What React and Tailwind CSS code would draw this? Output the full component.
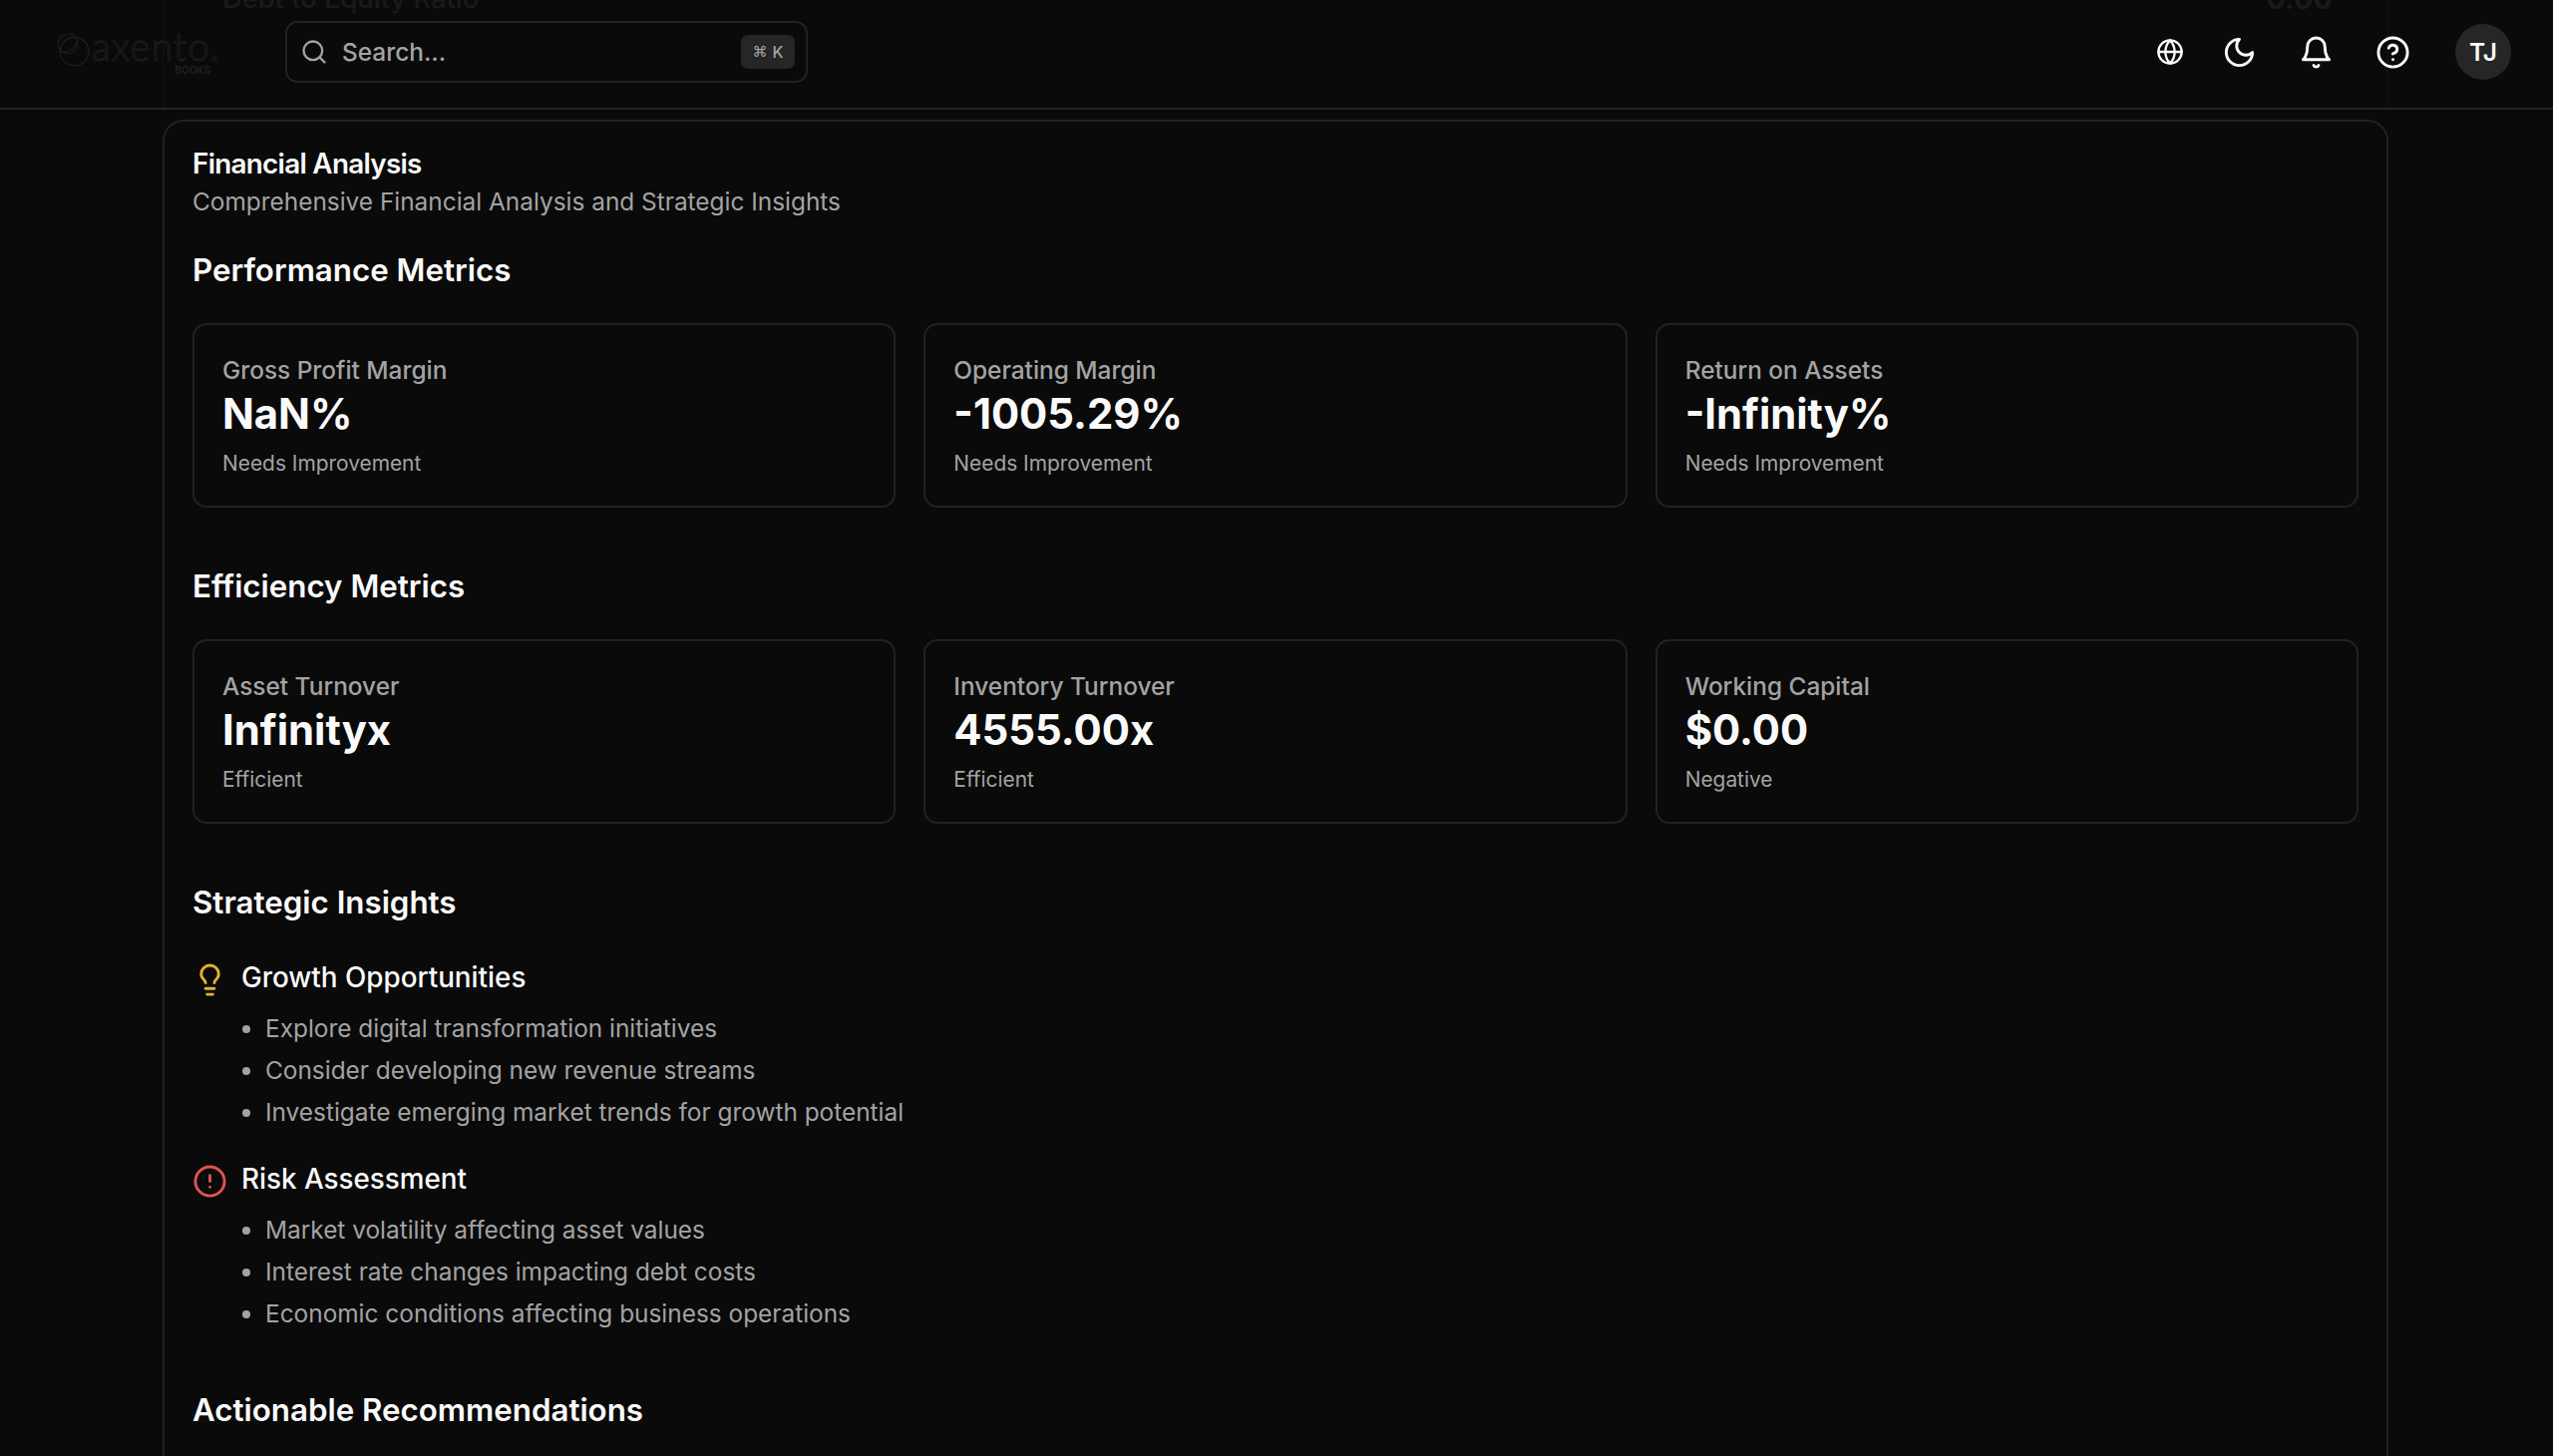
import { Search, Globe, CircleHelp, Lightbulb, CircleAlert } from "lucide-react";

const performance = [
  { label: "Gross Profit Margin", value: "NaN%", note: "Needs Improvement" },
  { label: "Operating Margin", value: "-1005.29%", note: "Needs Improvement" },
  { label: "Return on Assets", value: "-Infinity%", note: "Needs Improvement" },
];

const efficiency = [
  { label: "Asset Turnover", value: "Infinityx", note: "Efficient" },
  { label: "Inventory Turnover", value: "4555.00x", note: "Efficient" },
  { label: "Working Capital", value: "$0.00", note: "Negative" },
];

const growth = [
  "Explore digital transformation initiatives",
  "Consider developing new revenue streams",
  "Investigate emerging market trends for growth potential",
];

const risks = [
  "Market volatility affecting asset values",
  "Interest rate changes impacting debt costs",
  "Economic conditions affecting business operations",
];

function Metric({ label, value, note }) {
  return (
    <div className="h-[185px] rounded-[14px] border-2 border-[#222222] px-[28px] pt-[26px]">
      <div className="text-[24.4px] leading-[38px] font-medium text-[#a3a3a3]">{label}</div>
      <div className="text-[41.8px] leading-[50px] font-bold text-[#fafafa]">{value}</div>
      <div className="mt-[9px] text-[20.9px] leading-[32px] text-[#a3a3a3]">{note}</div>
    </div>
  );
}

function Insight({ icon, title, items }) {
  return (
    <div>
      <div className="flex h-[42px] items-center gap-[14px]">
        <span className="mt-[5px]">{icon}</span>
        <h4 className="text-[27.8px] leading-[42px] font-medium text-[#fafafa]">{title}</h4>
      </div>
      <ul className="mt-[9px] ml-[73px] list-disc text-[24.4px] leading-[42px] text-[#a3a3a3] marker:text-[#a3a3a3]">
        {items.map((item) => (
          <li key={item}>{item}</li>
        ))}
      </ul>
    </div>
  );
}

function Header() {
  return (
    <header className="relative h-[110px] overflow-hidden border-b-2 border-[#222222]">
      {/* the part of the page that has scrolled under the bar */}
      <div className="absolute top-0 left-[163px] flex h-[108px] w-[2232px] items-start justify-between border-x-2 border-[#0f0f0f] pr-[54px] pl-[58px] text-[27.3px] leading-[34px] font-medium text-[#1a1a1a]">
        <span className="-mt-[18px]">Debt to Equity Ratio</span>
        <span className="-mt-[18px] text-[29px] font-bold">0.00</span>
      </div>
      <div className="relative flex h-[104px] items-center pr-[42px] pl-[57px]">
        <div className="flex w-[229px] items-center">
          <svg viewBox="3 3 30 30" className="mt-[-4px] h-[33px] w-[33px] text-[#1f1f1f]" fill="none" stroke="currentColor" strokeWidth="1.1">
            <circle cx="19" cy="19" r="13" />
            <circle cx="13" cy="12" r="9" />
            <path d="M7 19c4 2 12-1 14-9" />
          </svg>
          <div className="ml-[7px] flex w-[124px] flex-col items-end">
            <span className="font-['Lato',sans-serif] text-[39px] leading-[36px] font-light tracking-[1px] text-transparent [-webkit-text-stroke:1px_#1d1d1d]">axento.</span>
            <span className="mr-[10px] text-[10px] leading-[12px] font-bold text-[#1f1f1f]">BOOKS</span>
          </div>
        </div>
        <div className="flex h-[62px] w-[524px] items-center rounded-[12px] border-2 border-[#222222] bg-[#0a0a0a] pr-[11px] pl-[13px]">
          <Search className="h-[28px] w-[28px] text-[#a3a3a3]" />
          <span className="ml-[14px] text-[24.4px] font-medium text-[#a3a3a3]">Search...</span>
          <span className="ml-auto flex h-[34px] w-[54px] items-center justify-center gap-[5px] rounded-[7px] bg-[#262626] text-[16px] font-medium text-[#a3a3a3]">
            <span className="font-['DejaVu_Sans',sans-serif] text-[15px]">⌘</span>
            <span>K</span>
          </span>
        </div>
        <div className="ml-auto flex items-center text-[#fafafa]">
          <button className="flex w-[63px] justify-center">
            <Globe className="h-[28px] w-[28px]" />
          </button>
          <button className="flex w-[77px] justify-center">
            <svg viewBox="0 0 24 24" className="h-[35px] w-[35px]" fill="none" stroke="currentColor" strokeWidth="2" strokeLinecap="round" strokeLinejoin="round">
              <path d="M12 3a6 6 0 0 0 9 9 9 9 0 1 1-9-9Z" />
            </svg>
          </button>
          <button className="flex w-[77px] justify-center">
            <svg viewBox="0 0 24 24" className="h-[35px] w-[35px]" fill="none" stroke="currentColor" strokeWidth="2" strokeLinecap="round" strokeLinejoin="round">
              <path d="M6 8a6 6 0 0 1 12 0c0 7 3 9 3 9H3s3-2 3-9" />
              <path d="M10.3 21a1.94 1.94 0 0 0 3.4 0" />
            </svg>
          </button>
          <button className="flex w-[77px] justify-center">
            <CircleHelp className="h-[35px] w-[35px]" />
          </button>
          <div className="ml-[24px] flex h-[56px] w-[56px] items-center justify-center rounded-full bg-[#262626] text-[24.4px] font-semibold text-[#fafafa]">TJ</div>
        </div>
      </div>
    </header>
  );
}

export default function App() {
  return (
    <div className="h-[1460px] overflow-hidden bg-[#0a0a0a] font-['Inter',sans-serif]">
      <Header />
      <main className="mt-[10px] ml-[163px] w-[2232px] rounded-[21px] border-2 border-[#222222] px-[28px] pt-[24px] pb-[200px]">
        <h2 className="text-[27.8px] leading-[36px] font-semibold tracking-tight text-[#fafafa]">Financial Analysis</h2>
        <p className="mt-[1px] text-[24.4px] leading-[38px] text-[#a3a3a3]">Comprehensive Financial Analysis and Strategic Insights</p>

        <h3 className="mt-[26px] text-[31.3px] leading-[48px] font-semibold text-[#fafafa]">Performance Metrics</h3>
        <div className="mt-[29px] grid grid-cols-3 gap-[28px]">
          {performance.map((m) => (
            <Metric key={m.label} {...m} />
          ))}
        </div>

        <h3 className="mt-[55px] text-[31.3px] leading-[48px] font-semibold text-[#fafafa]">Efficiency Metrics</h3>
        <div className="mt-[29px] grid grid-cols-3 gap-[28px]">
          {efficiency.map((m) => (
            <Metric key={m.label} {...m} />
          ))}
        </div>

        <h3 className="mt-[55px] text-[31.3px] leading-[48px] font-semibold text-[#fafafa]">Strategic Insights</h3>
        <div className="mt-[30px] flex flex-col gap-[25px]">
          <Insight icon={<Lightbulb className="h-[35px] w-[35px] text-[#e5b02e]" />} title="Growth Opportunities" items={growth} />
          <Insight icon={<CircleAlert className="h-[35px] w-[35px] text-[#e05252]" />} title="Risk Assessment" items={risks} />
        </div>

        <h3 className="mt-[52px] text-[31.3px] leading-[48px] font-semibold text-[#fafafa]">Actionable Recommendations</h3>
      </main>
    </div>
  );
}
